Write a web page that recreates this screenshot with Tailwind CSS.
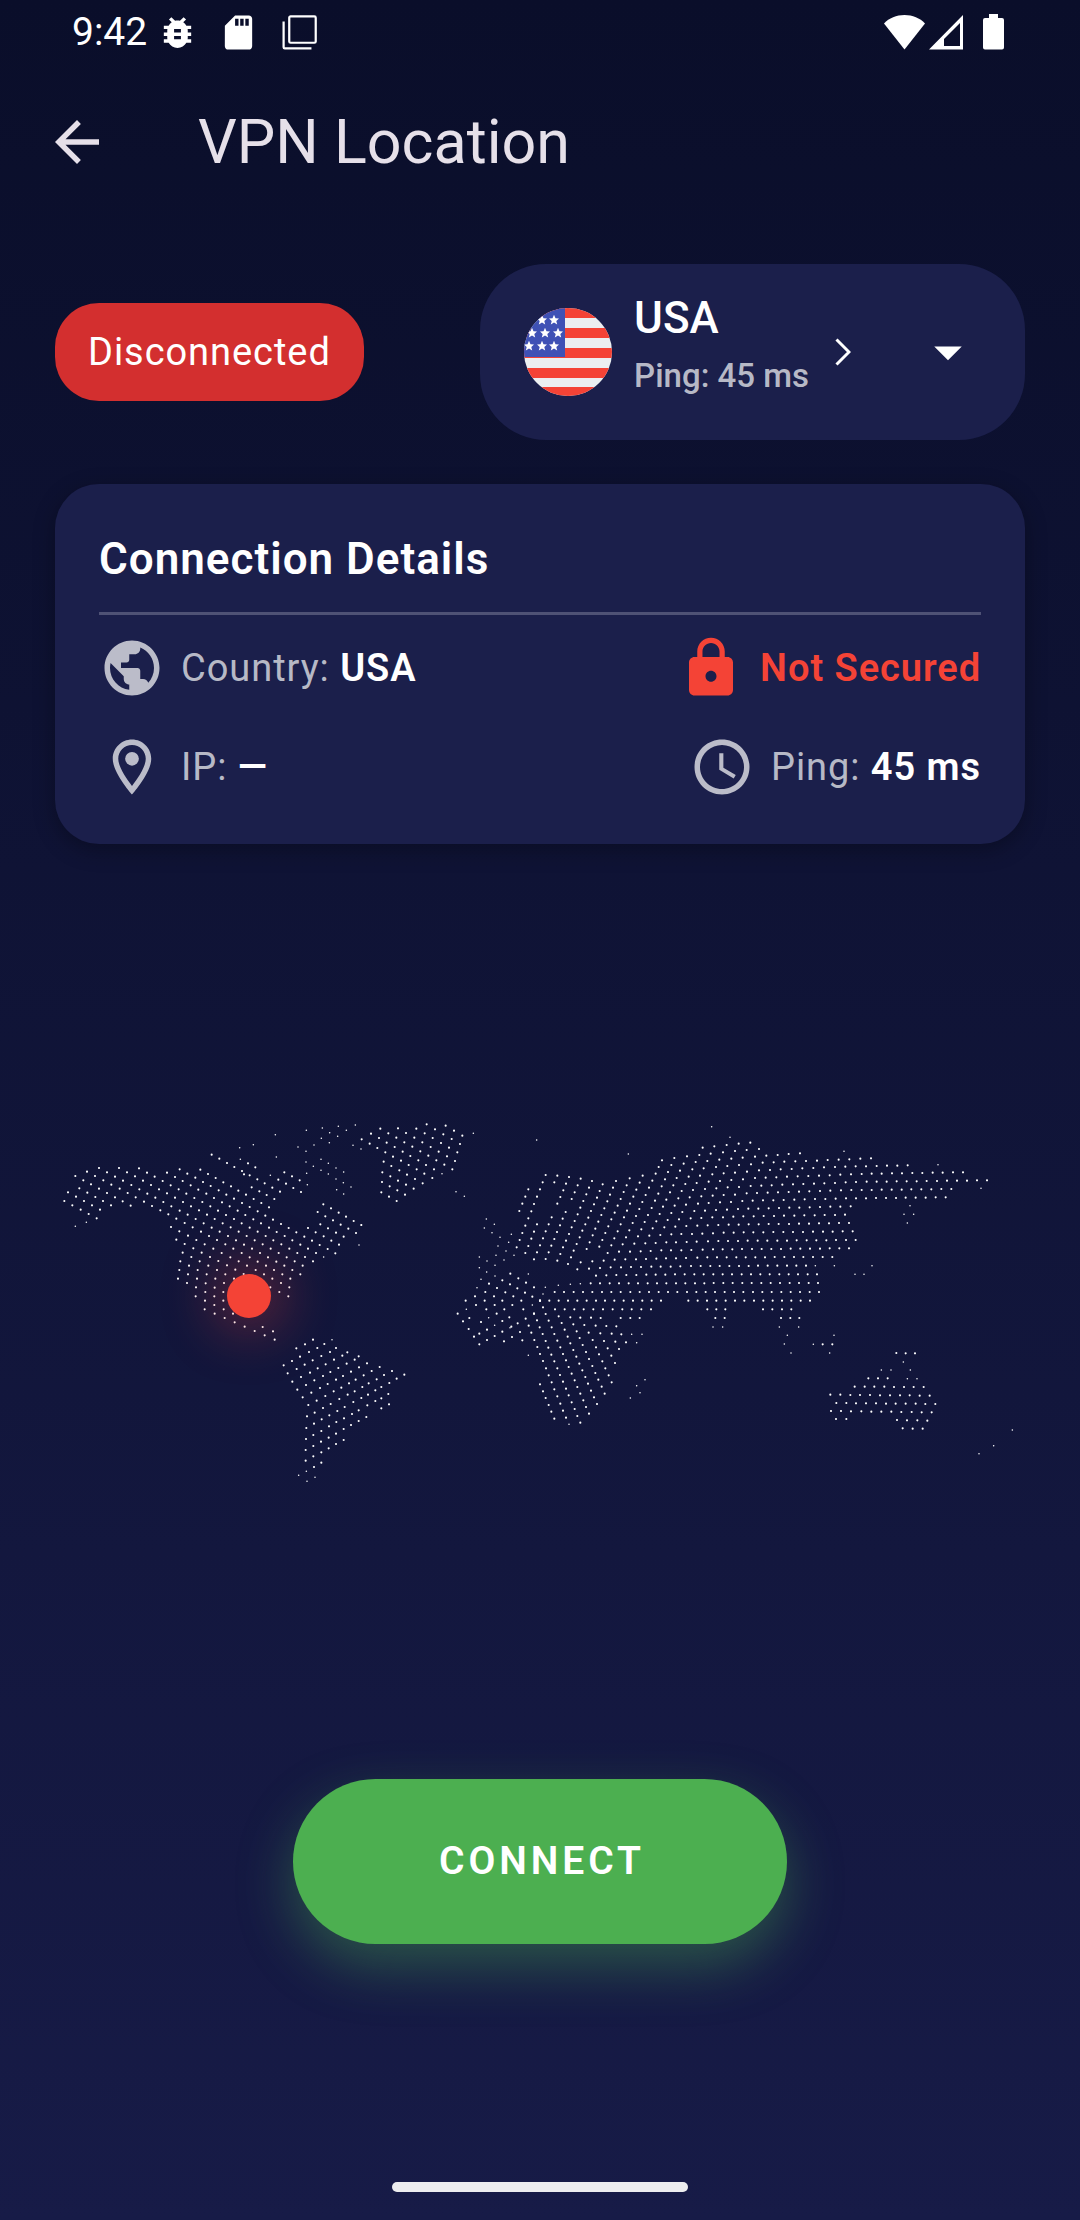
<!DOCTYPE html>
<html lang="en">
<head>
    <meta charset="UTF-8">
    <meta name="viewport" content="width=device-width, initial-scale=1.0">
    <title>VPN Location</title>
    <script src="https://cdn.jsdelivr.net/npm/@tailwindcss/browser@4"></script>
</head>
<body class="flex min-h-screen flex-col bg-linear-to-b from-[#0a0e2a] to-[#171b47] font-[Roboto,sans-serif] text-white">

    <!-- Status bar -->
    <div class="flex h-16 items-center justify-between pl-18 pr-19">
        <div class="flex items-center">
            <span class="mr-2.5 text-[39px] leading-none">9:42</span>
            <div class="flex items-center gap-5">
                <svg class="size-[41px]" viewBox="0 0 24 24" fill="currentColor" aria-hidden="true"><path d="M20 8h-2.81c-.45-.78-1.07-1.45-1.82-1.96L17 4.41 15.59 3l-2.17 2.17C12.96 5.06 12.49 5 12 5s-.96.06-1.41.17L8.41 3 7 4.41l1.62 1.63C7.88 6.55 7.26 7.22 6.81 8H4v2h2.09c-.05.33-.09.66-.09 1v1H4v2h2v1c0 .34.04.67.09 1H4v2h2.81c1.04 1.79 2.97 3 5.19 3s4.15-1.21 5.19-3H20v-2h-2.09c.05-.33.09-.66.09-1v-1h2v-2h-2v-1c0-.34-.04-.67-.09-1H20V8zm-6 8h-4v-2h4v2zm0-4h-4v-2h4v2z"/></svg>
                <svg class="size-[41px]" viewBox="0 0 24 24" fill="currentColor" aria-hidden="true"><path d="M18 2h-8L4.02 8 4 20c0 1.1.9 2 2 2h12c1.1 0 2-.9 2-2V4c0-1.1-.9-2-2-2zm-6 6h-2V4h2v4zm3 0h-2V4h2v4zm3 0h-2V4h2v4z"/></svg>
                <svg class="size-[41px]" viewBox="0 0 24 24" fill="none" stroke="currentColor" stroke-width="1.3" aria-hidden="true"><rect x="6" y="2.6" width="15.5" height="15.4" rx=".8"/><path d="M2.7 5.5V20.6q0 .7.7.7H19"/></svg>
            </div>
        </div>
        <div class="flex items-center gap-1">
            <svg class="h-9 w-[41px]" viewBox="0 0 41 36" fill="currentColor" aria-hidden="true"><path d="M20.500 35.500L0 9.500C5 4 12.500 1 20.500 1S36 4 41 9.500z"/></svg>
            <svg class="h-9 w-[34px]" viewBox="0 0 34 36" fill="currentColor" aria-hidden="true"><path fill-rule="evenodd" d="M34 1v34.500H0zM31 9L15 25v7h16z"/></svg>
            <svg class="ml-4 h-9 w-[21px]" viewBox="0 0 21 36" fill="currentColor" aria-hidden="true"><path d="M6 0h9v4h4q2 0 2 2v27.500q0 2-2 2H2q-2 0-2-2V6q0-2 2-2h4z"/></svg>
        </div>
    </div>

    <!-- App bar -->
    <header class="flex h-[156px] items-center gap-[88px] px-11 text-[#e6e0e9]">
        <button type="button" aria-label="Back">
            <svg class="size-[66px]" viewBox="0 0 24 24" fill="currentColor"><path d="M20 11H7.830l5.590-5.590L12 4l-8 8 8 8 1.410-1.410L7.830 13H20v-2z"/></svg>
        </button>
        <h1 class="text-[61px] leading-none">VPN Location</h1>
    </header>

    <main class="flex flex-1 flex-col px-[55px] pt-11">
        <div class="flex items-center justify-between">
            <span class="rounded-[44px] bg-[#d32f2f] px-[33px] py-[22px] text-[38px] leading-[54px] tracking-wide">Disconnected</span>

            <div class="flex h-44 items-center rounded-[66px] bg-[#1b1f4b] px-11">
                <svg class="size-[88px] rounded-full" viewBox="0 0 88 88" aria-hidden="true">
                    <rect width="88" height="88" fill="#eceff1"/>
                    <path d="M0 0h88v10H0zM0 20h88v10H0zM0 40h88v10H0zM0 60h88v10H0zM0 79h88v9H0z" fill="#f44336"/>
                    <rect width="41" height="49" fill="#3f51b5"/>
                    <defs><path id="star" fill="#fff" d="M0-5.200L1.500-1.700 5-1.500 2.300 1 3.200 4.500 0 2.600-3.200 4.500-2.300 1-5-1.500-1.500-1.700z"/></defs>
                    <use href="#star" x="18" y="12"/><use href="#star" x="30" y="12"/>
                    <use href="#star" x="8" y="25"/><use href="#star" x="21" y="25"/><use href="#star" x="34" y="25"/>
                    <use href="#star" x="5" y="38"/><use href="#star" x="18" y="38"/><use href="#star" x="30" y="38"/>
                </svg>
                <div class="ml-[22px] flex flex-col items-start gap-2 pb-3">
                    <select aria-label="Server" class="appearance-none bg-transparent text-[44px] font-medium leading-[52px]">
                        <option>USA</option>
                    </select>
                    <span class="text-[33px] font-medium leading-[48px] text-white/70">Ping: 45 ms</span>
                </div>
                <svg class="ml-[26px] h-7 w-4" viewBox="0 0 16 28" fill="none" stroke="currentColor" stroke-width="3" aria-hidden="true"><path d="M1.500 1.500L14 14 1.500 26.500"/></svg>
                <svg class="ml-16 size-[66px]" viewBox="0 0 24 24" fill="currentColor" aria-hidden="true"><path d="M7 10l5 5 5-5z"/></svg>
            </div>
        </div>

        <section class="mt-11 rounded-[44px] bg-[#1b1f4b] p-11 shadow-[0_6px_22px_rgba(0,0,0,0.3)]">
            <h2 class="text-[44px] font-semibold leading-[62px] tracking-[1px]">Connection Details</h2>
            <hr class="mb-5 mt-[22px] border-t-3 border-[#4f5275]">
            <div class="flex flex-col gap-[33px] text-[38px] leading-[54px] tracking-wide">
                <div class="flex items-center justify-between">
                    <div class="flex items-center gap-4 text-white/70">
                        <svg class="size-[66px]" viewBox="0 0 24 24" fill="currentColor" aria-hidden="true"><path d="M12 2C6.480 2 2 6.480 2 12s4.480 10 10 10 10-4.480 10-10S17.520 2 12 2zm-1 17.930c-3.950-.49-7-3.850-7-7.930 0-.62.08-1.210.21-1.790L9 15v1c0 1.100.9 2 2 2v1.930zm6.900-2.540c-.26-.81-1-1.390-1.900-1.390h-1v-3c0-.55-.45-1-1-1H8v-2h2c.55 0 1-.45 1-1V7h2c1.100 0 2-.9 2-2v-.41c2.930 1.190 5 4.060 5 7.410 0 2.080-.8 3.970-2.100 5.390z"/></svg>
                        <p>Country: <b class="font-semibold text-white">USA</b></p>
                    </div>
                    <div class="flex items-center gap-4 text-[#f44336]">
                        <svg class="size-[66px]" viewBox="0 0 24 24" fill="currentColor" aria-hidden="true"><path d="M18 8h-1V6c0-2.760-2.240-5-5-5S7 3.240 7 6v2H6c-1.100 0-2 .9-2 2v10c0 1.100.9 2 2 2h12c1.100 0 2-.9 2-2V10c0-1.100-.9-2-2-2zm-6 9c-1.100 0-2-.9-2-2s.9-2 2-2 2 .9 2 2-.9 2-2 2zm3.100-9H8.900V6c0-1.710 1.390-3.100 3.100-3.100 1.710 0 3.100 1.390 3.100 3.100v2z"/></svg>
                        <p class="font-semibold">Not Secured</p>
                    </div>
                </div>
                <div class="flex items-center justify-between text-white/70">
                    <div class="flex items-center gap-4">
                        <svg class="size-[66px]" viewBox="0 0 24 24" fill="currentColor" aria-hidden="true"><path d="M12 2C8.130 2 5 5.130 5 9c0 5.250 7 13 7 13s7-7.750 7-13c0-3.870-3.130-7-7-7zM7 9c0-2.760 2.240-5 5-5s5 2.240 5 5c0 2.880-2.880 7.190-5 9.880C9.920 16.210 7 11.850 7 9z"/><circle cx="12" cy="9" r="2.500"/></svg>
                        <p>IP: <b class="font-semibold text-white">—</b></p>
                    </div>
                    <div class="flex items-center gap-4">
                        <svg class="size-[66px]" viewBox="0 0 24 24" fill="currentColor" aria-hidden="true"><path d="M11.990 2C6.470 2 2 6.480 2 12s4.470 10 9.990 10C17.520 22 22 17.520 22 12S17.520 2 11.990 2zM12 20c-4.420 0-8-3.580-8-8s3.580-8 8-8 8 3.580 8 8-3.580 8-8 8zm.5-13H11v6l5.250 3.150.75-1.230-4.500-2.670z"/></svg>
                        <p>Ping: <b class="font-semibold text-white">45 ms</b></p>
                    </div>
                </div>
            </div>
        </section>

        <!-- World map -->
        <div class="flex flex-1 items-center pb-4">
            <div class="relative w-full">
                <svg id="map" class="block w-full" viewBox="165 60 2910 1101" fill="#fff" role="img" aria-label="World map"></svg>
                <span class="absolute left-[20%] top-[48%] size-11 -translate-x-1/2 -translate-y-1/2 rounded-full bg-[#f44336] shadow-[0_0_55px_11px_rgba(244,67,54,0.4)]"></span>
            </div>
        </div>
    </main>

    <div class="flex justify-center">
        <button type="button" class="h-[165px] w-[494px] rounded-full bg-[#4caf50] pl-1 text-[39px] font-semibold tracking-widest shadow-[0_22px_55px_rgba(76,175,80,0.4)]">CONNECT</button>
    </div>

    <div class="flex justify-center pb-7 pt-[238px]">
        <div class="h-[10px] w-[296px] rounded-full bg-[#ededef]"></div>
    </div>

    <script>
        // dot runs per sheet: x1, y1, x2, y2, number of dots
        const sheets = [
            { dx: 120, rows: [
                // north america
                [84,277,180,329,5],[73,303,170,355,5],[118,265,213,316,5],[106,228,272,317,8],
                [141,215,751,536,26],[177,204,781,523,26],[237,204,788,497,24],[297,205,819,484,23],
                [381,218,828,459,20],[419,208,886,460,21],[481,209,687,322,10],[804,384,897,434,5],
                [515,164,720,275,10],[612,223,612,223,1],[635,262,703,297,4],[841,373,911,410,4],[833,336,948,399,6],
                [850,313,964,375,6],[393,381,748,562,15],[409,419,611,522,9],[691,562,745,589,3],
                [428,458,582,536,7],[421,484,552,549,6],[418,510,550,576,6],[414,536,550,602,6],
                [467,589,579,641,5],[494,628,704,719,8],[668,681,699,694,2],
                [733,217,779,241,3],[715,239,783,276,4],[624,190,646,202,2],
                // south america
                [819,719,956,769,5],[795,733,1093,824,9],[769,745,1070,836,9],[780,770,1048,849,8],
                [756,783,1024,861,8],[731,796,1045,882,9],[743,820,1024,895,8],[757,845,1047,913,8],
                [772,869,1024,925,7],[788,892,956,931,5],[805,915,979,951,5],[824,938,956,963,4],
                [801,949,933,975,4],[822,971,911,987,3],[799,984,888,1001,3],[820,1005,911,1020,3],
                [798,1017,888,1032,3],[820,1038,866,1045,2],[797,1050,844,1057,2],[820,1069,844,1088,2],
                [797,1082,822,1101,2]
            ], dots: [
                106,379,139,367,599,143,640,134,706,104,709,171,799,91,774,141,798,154,822,135,844,115,
                869,98,847,84,868,128,893,109,895,79,919,91,946,75,798,186,820,199,843,178,865,190,888,204,
                911,216,910,248,933,261,888,237,865,222,843,211,800,220,802,254,890,269,911,282,691,226,
                939,136,601,178,851,471,957,435,799,1114,825,1132,776,1126,801,1144,876,719
            ] },
            { dx: 1080, rows: [
                // greenland
                [33,101,222,208,9],[61,86,277,208,10],[114,85,285,183,8],[169,86,292,157,6],[200,73,300,132,5],
                [257,77,307,107,3],[5,118,217,234,10],[71,185,188,250,6],[67,217,161,266,5],[66,246,135,284,4],
                [64,277,110,303,3],
                // europe
                [557,225,470,442,11],[505,268,478,333,4],[592,227,583,247,2],[627,231,592,311,5],
                [575,352,522,478,7],[531,373,496,459,5],[662,236,635,297,4],[617,336,557,477,8],
                [696,243,592,482,13],[728,253,624,492,13],[768,243,680,447,11],[662,487,652,508,2],
                [809,235,718,440,11],[697,484,687,506,2],[848,227,754,436,11],[743,459,708,527,4],
                [887,221,788,433,11],[777,455,739,526,4],[906,181,896,201,2],[943,174,924,216,3],
                [915,238,834,409,9],[823,431,769,525,5],[981,169,868,407,12],[856,430,799,525,5],
                [1028,143,913,382,12],[901,405,829,525,6],[1063,139,946,380,12],[934,403,859,524,6],
                // africa
                [451,521,522,562,4],[427,541,540,602,6],[387,551,484,602,5],[376,576,427,602,3],
                [457,615,522,641,3],[345,589,433,628,4],[317,602,410,641,4],[448,652,473,670,2],
                [328,654,363,666,2],[427,663,480,696,3],[381,689,427,695,2],[456,711,487,721,2],
                [293,641,358,733,5],[358,701,381,720,2],[404,708,432,724,2],
                [497,656,618,953,15],[540,853,583,956,6],[522,641,661,968,17],[540,602,687,941,18],
                [596,649,711,912,14],[631,652,734,881,12],[661,653,698,720,4],[708,742,755,847,6],
                [693,653,721,700,3],[732,723,765,789,4],[722,654,755,701,3],[766,725,777,747,2],
                [769,679,798,727,3],[782,654,839,654,3],[585,628,873,628,11],[540,602,903,602,14],
                [584,576,1377,576,29],[692,550,1374,549,25],[985,602,1350,602,14]
            ], dots: [
                340,100,3,147,246,221,288,275,313,289,4,375,530,120,805,162,379,357,373,384,403,373,396,398,
                420,412,414,438,454,403,446,427,438,453,408,466,358,471,381,483,358,503,405,496,432,480,380,516,
                405,528,462,466,505,522,363,538,351,563,319,628,386,653,404,676,450,683,549,582,556,562,595,556,
                631,553,661,551,517,615,815,703,846,703,830,728,830,857,855,839,840,878,811,894,505,766,627,973
            ] },
            { dx: 2100, rows: [
                // asia
                [80,135,-28,355,11],[-41,378,-133,524,7],[116,131,4,354,11],[-8,377,-104,524,7],
                [151,128,37,352,11],[23,376,-75,523,7],[177,147,69,352,10],[55,375,-8,473,5],[-27,498,-46,523,2],
                [199,167,300,160,4],[188,188,513,175,11],[177,211,405,201,8],[436,200,623,196,7],
                [165,234,485,222,11],[515,221,789,217,10],[152,258,500,245,12],[530,245,861,241,12],
                [140,280,454,270,11],[485,270,754,267,10],[127,303,438,295,11],[468,295,737,292,10],
                [114,327,452,319,12],[100,350,435,344,12],[86,374,447,369,13],[71,398,458,394,14],
                [55,423,467,420,15],[39,448,447,445,15],[22,472,397,471,14],[2,498,318,497,12],
                [-17,523,351,523,14],[22,628,76,628,3],[189,628,274,628,4],[46,654,74,654,2],[243,654,298,654,3],
                // oceania
                [589,759,645,760,3],[505,835,563,835,3],[464,860,671,861,8],[391,884,689,887,11],
                [409,909,706,912,11],[393,933,695,937,11],[408,957,439,957,2],[591,960,682,962,4],
                [608,985,668,986,3],[368,733,397,733,2]
            ], dots: [
                346,497,403,497,516,497,39,681,68,681,238,681,296,681,262,706,402,706,253,732,340,733,273,759,
                389,759,630,317,612,343,641,343,622,369,843,265,714,194,432,154,35,80,90,112,465,523,492,523,
                610,786,544,810,573,810,631,810,622,836,651,836,937,990,881,1037,837,1061
            ] }
        ];

        const map = document.getElementById('map');

        function addDot(x, y, r) {
            const c = document.createElementNS('http://www.w3.org/2000/svg', 'circle');
            c.setAttribute('cx', Math.round(x));
            c.setAttribute('cy', Math.round(y));
            c.setAttribute('r', r);
            map.appendChild(c);
        }

        sheets.forEach(function(sheet) {
            sheet.rows.forEach(function([x1, y1, x2, y2, n]) {
                for (let i = 0; i < n; i++) {
                    const t = n > 1 ? i / (n - 1) : 0;
                    addDot(sheet.dx + x1 + (x2 - x1) * t, y1 + (y2 - y1) * t, 3.2);
                }
            });
            for (let i = 0; i < sheet.dots.length; i += 2) {
                addDot(sheet.dx + sheet.dots[i], sheet.dots[i + 1], 2.3);
            }
        });
    </script>
</body>
</html>
